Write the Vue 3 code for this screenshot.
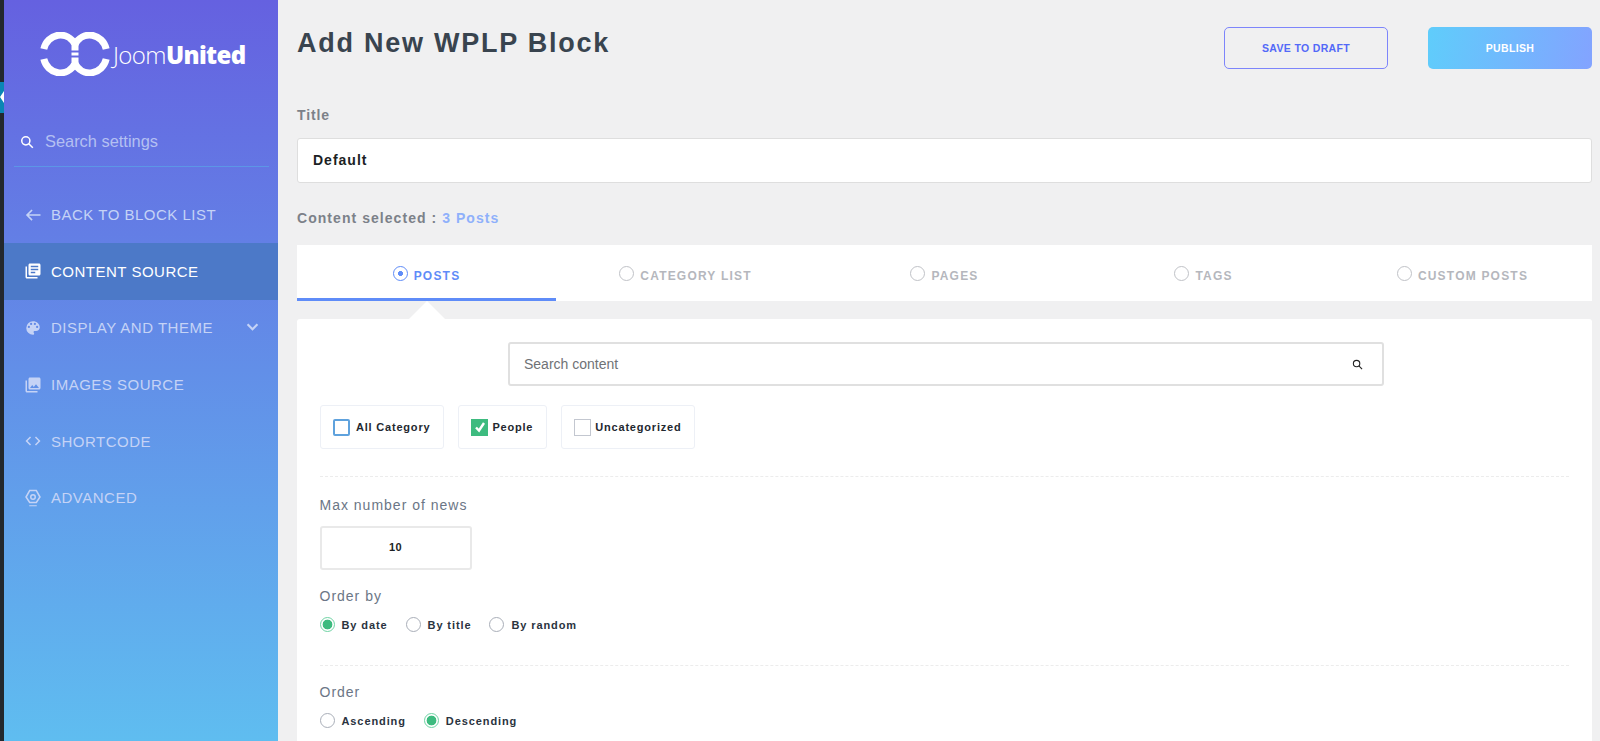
<template>
  <div class="page">
    <div class="admin-strip">
      <div class="collapse-tab"></div>
    </div>

    <aside class="sidebar">
      <div class="logo">
        <svg class="logo-mark" viewBox="0 0 70 44" width="70" height="44">
          <g fill="none" stroke="#fff" stroke-width="7">
            <path d="M3.8 17 A17 18.5 0 0 1 35 12.4 V18.5" />
            <path d="M3.8 27 A17 18.5 0 0 0 35 31.6 V25.5" />
            <path d="M66.2 17 A17 18.5 0 0 0 35 12.4" />
            <path d="M66.2 27 A17 18.5 0 0 1 35 31.6" />
          </g>
          <rect x="31.5" y="20.5" width="7" height="3" fill="#fff" />
        </svg>
        <span class="logo-text"><span class="light">Joom</span><b>United</b></span>
      </div>

      <div class="side-search">
        <svg viewBox="0 0 24 24" width="14" height="14" fill="none" stroke="#fff" stroke-width="2.6">
          <circle cx="10" cy="10" r="7" />
          <path d="M15 15l7 7" />
        </svg>
        <span>Search settings</span>
      </div>

      <nav class="menu">
        <a v-for="item in menu" :key="item.label" class="menu-item" :class="{ active: item.active }">
          <svg class="menu-icon" viewBox="0 0 24 24" width="18" height="18" fill="currentColor" v-html="item.icon"></svg>
          <span>{{ item.label }}</span>
          <svg v-if="item.sub" class="chevron" viewBox="0 0 14 10" width="13" height="9" fill="none" stroke="currentColor" stroke-width="2.4">
            <path d="M1.5 1.5L7 7l5.5-5.5" />
          </svg>
        </a>
      </nav>
    </aside>

    <main class="main">
      <header class="head">
        <h1>Add New WPLP Block</h1>
        <div class="actions">
          <button class="btn draft">SAVE TO DRAFT</button>
          <button class="btn publish">PUBLISH</button>
        </div>
      </header>

      <label class="title-label">Title</label>
      <div class="title-input">Default</div>

      <p class="selected">Content selected : <span>3 Posts</span></p>

      <div class="tabs">
        <div v-for="tab in tabs" :key="tab" class="tab" :class="{ on: tab === 'POSTS' }">
          <i class="tab-radio"></i>{{ tab }}
        </div>
      </div>

      <section class="panel">
        <div class="content-search">
          <span>Search content</span>
          <svg viewBox="0 0 24 24" width="11" height="11" fill="none" stroke="#222" stroke-width="2.4">
            <circle cx="10" cy="10" r="7" />
            <path d="M15 15l7 7" />
          </svg>
        </div>

        <div class="cats">
          <div class="cat">
            <i class="box focus"></i>All Category
          </div>
          <div class="cat">
            <i class="box checked">
              <svg viewBox="0 0 14 14" width="14" height="14" fill="none" stroke="#fff" stroke-width="2.4">
                <path d="M3 7.5l3 3 5-7.5" />
              </svg>
            </i>People
          </div>
          <div class="cat">
            <i class="box"></i>Uncategorized
          </div>
        </div>

        <div class="sep first"></div>

        <div class="field-label max">Max number of news</div>
        <div class="num-input">10</div>

        <div class="field-label by">Order by</div>
        <div class="radios">
          <span v-for="r in orderBy" :key="r.label" class="radio-item">
            <i class="radio" :class="{ sel: r.sel }"></i>{{ r.label }}
          </span>
        </div>

        <div class="sep second"></div>

        <div class="field-label ord">Order</div>
        <div class="radios">
          <span v-for="r in order" :key="r.label" class="radio-item">
            <i class="radio" :class="{ sel: r.sel }"></i>{{ r.label }}
          </span>
        </div>
      </section>
    </main>
  </div>
</template>

<script setup>
const menu = [
  {
    label: "BACK TO BLOCK LIST",
    icon: '<path d="M22 11H6.5l5-5-1.5-1.5L2.5 12l7.5 7.5 1.5-1.5-5-5H22z"/>',
  },
  {
    label: "CONTENT SOURCE",
    active: true,
    icon: '<path d="M4 6H2v14c0 1.1.9 2 2 2h14v-2H4V6zm16-4H8c-1.1 0-2 .9-2 2v12c0 1.1.9 2 2 2h12c1.1 0 2-.9 2-2V4c0-1.1-.9-2-2-2zm-1 9H9V9h10v2zm-4 4H9v-2h6v2zm4-8H9V5h10v2z"/>',
  },
  {
    label: "DISPLAY AND THEME",
    sub: true,
    icon: '<path d="M12 3a9 9 0 0 0 0 18c.83 0 1.5-.67 1.5-1.5 0-.39-.15-.74-.39-1.01-.23-.26-.38-.61-.38-.99 0-.83.67-1.5 1.5-1.5H16c2.76 0 5-2.24 5-5 0-4.42-4.03-8-9-8zm-5.5 9a1.5 1.5 0 1 1 0-3 1.5 1.5 0 0 1 0 3zm3-4a1.5 1.5 0 1 1 0-3 1.5 1.5 0 0 1 0 3zm5 0a1.5 1.5 0 1 1 0-3 1.5 1.5 0 0 1 0 3zm3 4a1.5 1.5 0 1 1 0-3 1.5 1.5 0 0 1 0 3z"/>',
  },
  {
    label: "IMAGES SOURCE",
    icon: '<path d="M22 16V4c0-1.1-.9-2-2-2H8c-1.1 0-2 .9-2 2v12c0 1.1.9 2 2 2h12c1.1 0 2-.9 2-2zm-11-4l2.03 2.71L16 11l4 5H8l3-4zM2 6v14c0 1.1.9 2 2 2h14v-2H4V6H2z"/>',
  },
  {
    label: "SHORTCODE",
    icon: '<path d="M9.4 16.6L4.8 12l4.6-4.6L8 6l-6 6 6 6 1.4-1.4zm5.2 0l4.6-4.6-4.6-4.6L16 6l6 6-6 6-1.4-1.4z"/>',
  },
  {
    label: "ADVANCED",
    icon: '<path fill-rule="evenodd" d="M7 1h10l5.5 9.5L17 19H7L1.5 10.5 7 1zm1.2 2L4 10.5 8.2 17h7.6L20 10.5 15.8 3H8.2zM12 6.5a4 4 0 1 1 0 8 4 4 0 0 1 0-8zm0 2a2 2 0 1 0 0 4 2 2 0 0 0 0-4zM7 21.5h10V23H7z"/>',
  },
];

const tabs = ["POSTS", "CATEGORY LIST", "PAGES", "TAGS", "CUSTOM POSTS"];

const orderBy = [
  { label: "By date", sel: true },
  { label: "By title" },
  { label: "By random" },
];

const order = [{ label: "Ascending" }, { label: "Descending", sel: true }];
</script>

<style>
html,
body {
  margin: 0;
  background: #f0f0f1;
}
</style>

<style scoped>
.page {
  display: flex;
  height: 741px;
  overflow: hidden;
  font-family: "Liberation Sans", Arial, sans-serif;
  background: #f0f0f1;
}

.admin-strip {
  position: relative;
  width: 4px;
  flex: none;
  background: #23282d;
}

.collapse-tab {
  position: absolute;
  top: 82px;
  left: 0;
  width: 4px;
  height: 31px;
  background: #0a86b4;
}

.collapse-tab::after {
  content: "";
  position: absolute;
  top: 9px;
  left: 0;
  border-top: 6px solid transparent;
  border-bottom: 6px solid transparent;
  border-right: 4px solid #fff;
}

.sidebar {
  width: 274px;
  flex: none;
  background: linear-gradient(180deg, #6561e0 0%, #5fbdf0 100%);
  color: #fff;
}

.logo {
  display: flex;
  align-items: center;
  padding: 32px 0 0 36px;
  height: 44px;
}

.logo-text {
  margin-left: 3px;
  font-family: "Open Sans", sans-serif;
  font-size: 24px;
  letter-spacing: -0.6px;
}

.logo-text .light {
  font-weight: 300;
}

.logo-text b {
  font-weight: 800;
}

.side-search {
  display: flex;
  align-items: center;
  gap: 11px;
  margin: 54px 9px 0 10px;
  padding: 0 0 13px 6px;
  border-bottom: 1px solid #5c96e6;
  height: 23px;
  font-size: 16.4px;
  color: #b4c0f2;
}

.menu {
  margin-top: 19.5px;
}

.menu-item {
  display: flex;
  align-items: center;
  height: 56.6px;
  padding: 0 19px 0 20px;
  font-size: 15px;
  letter-spacing: 0.5px;
  color: #c5d3f6;
}

.menu-item.active {
  background: #4c79c8;
  color: #fff;
}

.menu-icon {
  flex: none;
  margin-right: 9px;
}

.chevron {
  margin-left: auto;
}

.main {
  flex: 1;
  min-width: 0;
  padding: 0 8px 0 19px;
}

.head {
  display: flex;
  justify-content: space-between;
  height: 69px;
  padding-top: 27px;
  box-sizing: border-box;
}

h1 {
  margin: 0;
  font-size: 27px;
  line-height: 32px;
  letter-spacing: 1.75px;
  color: #39444f;
}

.actions {
  display: flex;
  gap: 40px;
}

.btn {
  width: 164px;
  height: 42px;
  box-sizing: border-box;
  border-radius: 5px;
  font-family: inherit;
  font-size: 10.5px;
  font-weight: 700;
  letter-spacing: 0.35px;
}

.draft {
  border: 1px solid #7d85fb;
  background: transparent;
  color: #5369f8;
}

.publish {
  border: 0;
  background: linear-gradient(100deg, #5fcdfb 0%, #83a3ff 100%);
  color: #fff;
}

.title-label {
  display: block;
  margin-top: 37px;
  font-size: 14px;
  line-height: 18px;
  font-weight: 700;
  letter-spacing: 0.9px;
  color: #7c8189;
}

.title-input {
  margin-top: 14px;
  height: 45px;
  box-sizing: border-box;
  border: 1px solid #dedede;
  border-radius: 3px;
  background: #fff;
  padding-left: 15px;
  font-size: 14px;
  line-height: 43px;
  font-weight: 700;
  letter-spacing: 1px;
  color: #1c1f24;
}

.selected {
  margin: 26px 0 0;
  font-size: 14px;
  line-height: 18px;
  font-weight: 700;
  letter-spacing: 1.05px;
  color: #7c8189;
}

.selected span {
  color: #8fb0fb;
}

.tabs {
  display: flex;
  margin-top: 18px;
  height: 56px;
  background: #fff;
}

.tab {
  position: relative;
  flex: 1;
  display: flex;
  align-items: center;
  justify-content: center;
  padding-top: 5px;
  font-size: 12px;
  font-weight: 700;
  letter-spacing: 1.2px;
  color: #b5b7bd;
}

.tab-radio {
  width: 13px;
  height: 13px;
  margin: -4px 6px 0 0;
  border: 1.5px solid #c0c2c7;
  border-radius: 50%;
  box-sizing: content-box;
}

.tab.on {
  color: #5f8cf8;
  box-shadow: inset 0 -3px 0 #5f8cf8;
}

.tab.on .tab-radio {
  border-color: #5f8cf8;
  background: radial-gradient(circle, #5f8cf8 0 2.2px, transparent 2.8px);
}

.tab.on::after {
  content: "";
  position: absolute;
  left: 50%;
  bottom: -18px;
  margin-left: -18px;
  border-left: 18px solid transparent;
  border-right: 18px solid transparent;
  border-bottom: 18px solid #fff;
}

.panel {
  margin-top: 18px;
  padding: 23px 23px 0 22.5px;
  height: 423px;
  box-sizing: border-box;
  background: #fff;
  border-radius: 3px 3px 0 0;
}

.content-search {
  display: flex;
  align-items: center;
  justify-content: space-between;
  width: 876px;
  height: 44px;
  box-sizing: border-box;
  margin-left: 188.5px;
  padding: 0 19px 0 14px;
  border: 2px solid #e0e0e0;
  border-radius: 3px;
  font-size: 14px;
  color: #6f7276;
}

.cats {
  display: flex;
  gap: 13.5px;
  margin-top: 19px;
}

.cat {
  display: flex;
  align-items: center;
  height: 44px;
  box-sizing: border-box;
  padding: 0 13px 0 12.5px;
  border: 1px solid #edf0f6;
  border-radius: 3px;
  font-size: 11px;
  font-weight: 700;
  letter-spacing: 0.8px;
  color: #23282f;
}

.box {
  display: flex;
  align-items: center;
  justify-content: center;
  width: 15px;
  height: 15px;
  margin-right: 4px;
  border: 1px solid #c3c7d0;
  background: #fff;
}

.box.focus {
  margin-right: 6px;
  border: 2px solid #5fa2dd;
  border-radius: 2px;
  width: 13px;
  height: 13px;
}

.box.checked {
  border-color: #3dbb7f;
  background: #3dbb7f;
}

.sep {
  border-top: 1px dashed #ececec;
}

.sep.first {
  margin-top: 27px;
}

.sep.second {
  margin-top: 31px;
}

.field-label {
  font-size: 14px;
  line-height: 18px;
  letter-spacing: 1px;
  color: #6b7686;
}

.field-label.max {
  margin-top: 19px;
}

.field-label.by,
.field-label.ord {
  margin-top: 17px;
}

.num-input {
  margin-top: 12px;
  width: 152px;
  height: 44px;
  box-sizing: border-box;
  border: 2px solid #e9e9e9;
  border-radius: 3px;
  text-align: center;
  font-size: 11px;
  line-height: 39px;
  font-weight: 700;
  letter-spacing: 0.5px;
  color: #1c1f24;
}

.radios {
  display: flex;
  gap: 18px;
  margin-top: 11px;
  height: 18px;
}

.radio-item {
  display: flex;
  align-items: center;
  font-size: 11px;
  font-weight: 700;
  letter-spacing: 0.9px;
  color: #2a3340;
}

.radio {
  width: 13px;
  height: 13px;
  margin: -2px 7px 0 0;
  border: 1px solid #a9aeb8;
  border-radius: 50%;
}

.radio.sel {
  border-color: #6fd3a4;
  background: radial-gradient(circle, #3dbb7f 0 4.6px, #fff 5.2px);
}
</style>
